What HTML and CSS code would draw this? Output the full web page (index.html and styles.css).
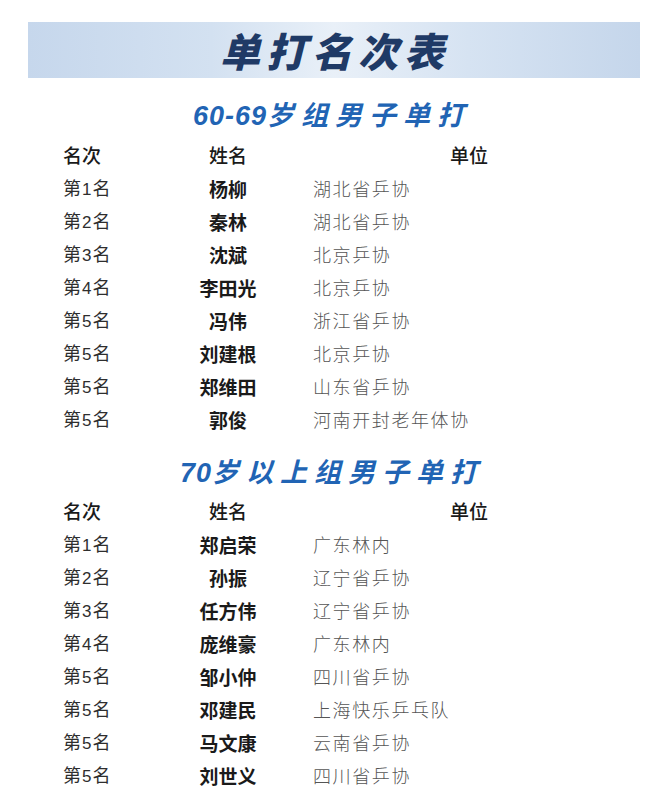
FILE: index.html
```html
<!DOCTYPE html>
<html lang="zh">
<head>
<meta charset="utf-8">
<link rel="stylesheet" href="styles.css">
</head>
<body>
<div class="page">
  <div class="banner"><h1 class="title">单打名次表</h1></div>

  <h2 class="subtitle first"><span class="num">60-69</span>岁组男子单打</h2>
  <div class="table">
    <div class="row head"><span class="rank">名次</span><span class="name">姓名</span><span class="unit">单位</span></div>
    <div class="row"><span class="rank">第<span class="d">1</span>名</span><span class="name">杨柳</span><span class="unit">湖北省乒协</span></div>
    <div class="row"><span class="rank">第<span class="d">2</span>名</span><span class="name">秦林</span><span class="unit">湖北省乒协</span></div>
    <div class="row"><span class="rank">第<span class="d">3</span>名</span><span class="name">沈斌</span><span class="unit">北京乒协</span></div>
    <div class="row"><span class="rank">第<span class="d">4</span>名</span><span class="name">李田光</span><span class="unit">北京乒协</span></div>
    <div class="row"><span class="rank">第<span class="d">5</span>名</span><span class="name">冯伟</span><span class="unit">浙江省乒协</span></div>
    <div class="row"><span class="rank">第<span class="d">5</span>名</span><span class="name">刘建根</span><span class="unit">北京乒协</span></div>
    <div class="row"><span class="rank">第<span class="d">5</span>名</span><span class="name">郑维田</span><span class="unit">山东省乒协</span></div>
    <div class="row"><span class="rank">第<span class="d">5</span>名</span><span class="name">郭俊</span><span class="unit">河南开封老年体协</span></div>
  </div>

  <h2 class="subtitle second"><span class="num">70</span>岁以上组男子单打</h2>
  <div class="table">
    <div class="row head"><span class="rank">名次</span><span class="name">姓名</span><span class="unit">单位</span></div>
    <div class="row"><span class="rank">第<span class="d">1</span>名</span><span class="name">郑启荣</span><span class="unit">广东林内</span></div>
    <div class="row"><span class="rank">第<span class="d">2</span>名</span><span class="name">孙振</span><span class="unit">辽宁省乒协</span></div>
    <div class="row"><span class="rank">第<span class="d">3</span>名</span><span class="name">任方伟</span><span class="unit">辽宁省乒协</span></div>
    <div class="row"><span class="rank">第<span class="d">4</span>名</span><span class="name">庞维豪</span><span class="unit">广东林内</span></div>
    <div class="row"><span class="rank">第<span class="d">5</span>名</span><span class="name">邹小仲</span><span class="unit">四川省乒协</span></div>
    <div class="row"><span class="rank">第<span class="d">5</span>名</span><span class="name">邓建民</span><span class="unit">上海快乐乒乓队</span></div>
    <div class="row"><span class="rank">第<span class="d">5</span>名</span><span class="name">马文康</span><span class="unit">云南省乒协</span></div>
    <div class="row"><span class="rank">第<span class="d">5</span>名</span><span class="name">刘世义</span><span class="unit">四川省乒协</span></div>
  </div>
</div>
</body>
</html>
```

FILE: styles.css
```css
html, body {
  margin: 0;
  padding: 0;
  background: #ffffff;
}

.page {
  width: 660px;
  height: 799px;
  overflow: hidden;
  font-family: "Noto Sans CJK SC", "Noto Sans", sans-serif;
  padding-top: 22px;
  box-sizing: border-box;
}

.banner {
  margin: 0 20px 0 28px;
  height: 56px;
  background: linear-gradient(90deg, #c6d7ec 0%, #d3e1f1 30%, #e9f0f8 50%, #d6e3f2 72%, #c5d6eb 100%);
  display: flex;
  align-items: center;
  justify-content: center;
}

.title {
  margin: 0;
  padding-left: 2px;
  font-size: 40px;
  line-height: 56px;
  font-weight: 900;
  letter-spacing: 6px;
  color: #1f3a66;
  font-style: italic;
}

.subtitle {
  margin: 0;
  height: 34px;
  line-height: 34px;
  text-align: center;
  font-size: 27px;
  font-weight: 700;
  font-style: italic;
  letter-spacing: 7px;
  color: #2164b4;
}

.subtitle .num {
  font-family: "Liberation Sans", sans-serif;
  letter-spacing: 1px;
}

.subtitle.first {
  margin-top: 19px;
  padding-left: 4px;
}

.subtitle.second {
  margin-top: 18.5px;
  padding-left: 4px;
}

.table {
  margin-top: 7px;
  padding-left: 63px;
}

.subtitle.second + .table {
  margin-top: 6px;
}

.row {
  display: grid;
  grid-template-columns: 112px 106px 1fr;
  height: 33px;
  align-items: center;
  font-size: 18px;
  line-height: 33px;
}

.rank {
  color: #2e2e2e;
  letter-spacing: 0;
}

.rank .d {
  font-family: "Liberation Sans", sans-serif;
  font-size: 17px;
  padding: 0 1px;
}

.name {
  text-align: center;
  font-weight: 700;
  color: #1a1a1a;
  font-size: 19px;
}

.unit {
  padding-left: 32px;
  color: #555555;
  font-weight: 300;
  letter-spacing: 1.6px;
}

.row.head .rank,
.row.head .name,
.row.head .unit {
  font-size: 19px;
  font-weight: 500;
  color: #1a1a1a;
  letter-spacing: 0;
}

.row.head .unit {
  padding-left: 169px;
}
```
